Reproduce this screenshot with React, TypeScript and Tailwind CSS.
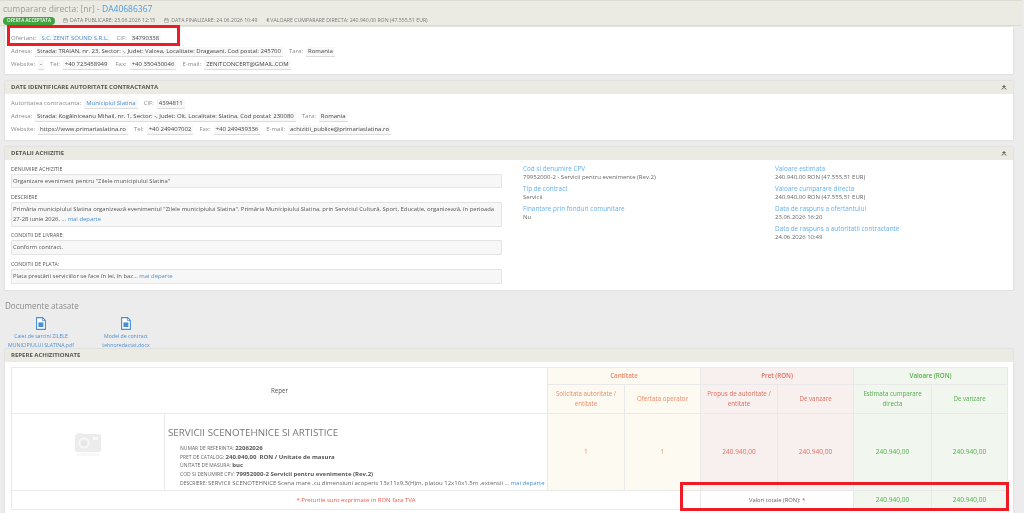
import type { ReactNode } from 'react';
import { Calendar } from 'lucide-react';

const font = { fontFamily: '"Open Sans", sans-serif' };

function Val({ children, link }: { children: ReactNode; link?: boolean }) {
  return (
    <span className={`mx-[3px] inline-block h-[10px] bg-[#f8f8f8] border-b border-[#dcdcdc] px-[2px] leading-[9px] ${link ? 'text-[#4a90d0]' : 'text-[#444]'}`}>
      {children}
    </span>
  );
}

function Row({ children }: { children: ReactNode }) {
  return <div className="flex h-[13px] items-center whitespace-nowrap text-[6px] text-[#8a8a8a]">{children}</div>;
}

function Lbl({ children }: { children: ReactNode }) {
  return <span className="ml-[3px] first:ml-0">{children}</span>;
}

function CollapseIcon() {
  return (
    <svg width="6" height="5" viewBox="0 0 7 6" className="fill-[#666]">
      <path d="M3.5 0 6 2.4H1z" />
      <path d="M3.5 2 7 5.4H5.6L3.5 3.4 1.4 5.4H0z" />
    </svg>
  );
}

function CardHead({ title, collapse = true }: { title: string; collapse?: boolean }) {
  return (
    <div className="flex h-[13px] items-center justify-between bg-[#ecebe3] pl-[6px] pr-[6px] text-[6px] font-bold text-[#555]">
      <span>{title}</span>
      {collapse && <CollapseIcon />}
    </div>
  );
}

function Field({ label, children, className }: { label: string; children: ReactNode; className: string }) {
  return (
    <div>
      <div className="h-[9px] text-[5.2px] leading-[9px] text-[#555]">{label}</div>
      <div className={`rounded-[1px] border border-[#e4e4e4] bg-[#f7f7f7] px-[1px] text-[5.9px] leading-[10px] text-[#555] ${className}`}>
        {children}
      </div>
    </div>
  );
}

function Info({ label, value }: { label: string; value: string }) {
  return (
    <div className="h-[20px] whitespace-nowrap">
      <div className="h-[8px] text-[6.4px] leading-[8px] text-[#66b0ee]">{label}</div>
      <div className="h-[8px] text-[6px] leading-[9px] text-[#666]">{value}</div>
    </div>
  );
}

function DocIcon() {
  return (
    <svg width="10" height="13" viewBox="0 0 10 13" className="mx-auto">
      <path d="M.6.6h6l2.8 2.8v9H.6z" fill="#fff" stroke="#4a90d0" strokeWidth="1.1" />
      <path d="M6.4.8v2.8h2.8" fill="none" stroke="#4a90d0" strokeWidth=".8" />
      <path d="M2.4 5.4h5v4.6h-5z" fill="#4a90d0" />
    </svg>
  );
}

function Doc({ l1, l2, w }: { l1: string; l2: string; w: string }) {
  return (
    <div className={`text-center text-[5.2px] leading-[8.5px] text-[#4a90d0] ${w}`}>
      <DocIcon />
      <div className="mt-[2px]">{l1}</div>
      <div>{l2}</div>
    </div>
  );
}

function CameraIcon() {
  return (
    <svg width="26" height="25" viewBox="0 0 26 25">
      <path d="M2 1h5v2H2z" fill="#eee" />
      <rect x="0" y="2" width="26" height="18" rx="2" fill="#ececec" />
      <circle cx="9" cy="11" r="5.6" fill="#f7f7f7" />
      <circle cx="9" cy="11" r="3.6" fill="#e8e8e8" />
      <rect x="18" y="5" width="5" height="3" fill="#f8f8f8" />
      <rect x="1" y="21" width="24" height="3" fill="#f8f8f8" />
    </svg>
  );
}

const cellBorder = 'border border-[#e9e9e9]';
const yellow = `${cellBorder} bg-[#fdfbf1] text-[#f08a6a]`;
const red = `${cellBorder} bg-[#f8f0ef] text-[#e0705f]`;
const green = `${cellBorder} bg-[#f1f7ef] text-[#55ad4e]`;

export default function App() {
  return (
    <div style={font} className="relative h-[513px] w-[1024px] overflow-hidden bg-[#ececec] blur-[0.45px]">
      {/* Title bar */}
      <div className="mr-[2px] h-[26px] border-y border-[#dcdcd4] bg-[#ecebe3] pl-[3px]">
        <div className="h-[15px] text-[8.5px] leading-[15px] text-[#9a9a9a]">
          cumparare directa: [nr] - <span className="text-[#4a9be0]">DA40686367</span>
        </div>
        <div className="flex h-[9px] items-center whitespace-nowrap text-[5.2px] text-[#777]">
          <span className="flex h-[8px] w-[52px] items-center justify-center rounded-full bg-[#3fa53f] text-[4.6px] font-semibold text-white">OFERTA ACCEPTATA</span>
          <Calendar size={5} className="ml-[8px] mr-[2px]" />
          <span>DATA PUBLICARE: 23.06.2026 12:15</span>
          <Calendar size={5} className="ml-[9px] mr-[2px]" />
          <span>DATA FINALIZARE: 24.06.2026 10:49</span>
          <span className="ml-[9px] mr-[1px]">€</span>
          <span>VALOARE CUMPARARE DIRECTA: 240.940,00 RON (47.555,51 EUR)</span>
        </div>
      </div>

      {/* Ofertant */}
      <div className="mx-[5px] mt-[1px] h-[47px] w-[1008px] bg-white pl-[6px] pt-[5px] shadow-[0_0_2px_#ccc]">
        <Row><Lbl>Ofertant:</Lbl><Val link>S.C. ZENIT SOUND S.R.L.</Val><Lbl>CIF:</Lbl><Val>34790338</Val></Row>
        <Row><Lbl>Adresa:</Lbl><Val>Strada: TRAIAN, nr. 23, Sector: -, Judet: Valcea, Localitate: Dragasani, Cod postal: 245700</Val><Lbl>Tara:</Lbl><Val>Romania</Val></Row>
        <Row><Lbl>Website:</Lbl><Val>-</Val><Lbl>Tel:</Lbl><Val>+40 723458949</Val><Lbl>Fax:</Lbl><Val>+40 350430046</Val><Lbl>E-mail:</Lbl><Val>ZENITCONCERT@GMAIL.COM</Val></Row>
      </div>

      {/* Autoritate */}
      <div className="mx-[5px] mt-[7px] h-[59px] w-[1008px] bg-white shadow-[0_0_2px_#ccc]">
        <CardHead title="DATE IDENTIFICARE AUTORITATE CONTRACTANTA" />
        <div className="pl-[6px] pt-[3px]">
          <Row><Lbl>Autoritatea contractanta:</Lbl><Val link>Municipiul Slatina</Val><Lbl>CIF:</Lbl><Val>4394811</Val></Row>
          <Row><Lbl>Adresa:</Lbl><Val>Strada: Kogălniceanu Mihail, nr. 1, Sector: -, Judet: Olt, Localitate: Slatina, Cod postal: 230080</Val><Lbl>Tara:</Lbl><Val>Romania</Val></Row>
          <Row><Lbl>Website:</Lbl><Val>https://www.primariaslatina.ro</Val><Lbl>Tel:</Lbl><Val>+40 249407002</Val><Lbl>Fax:</Lbl><Val>+40 249439336</Val><Lbl>E-mail:</Lbl><Val>achizitii_publice@primariaslatina.ro</Val></Row>
        </div>
      </div>

      {/* Detalii */}
      <div className="mx-[5px] mt-[7px] h-[143px] w-[1008px] bg-white shadow-[0_0_2px_#ccc]">
        <CardHead title="DETALII ACHIZITIE" />
        <div className="flex pt-[5px]">
          <div className="ml-[6px] flex w-[491px] flex-col gap-[4.5px]">
            <Field label="DENUMIRE ACHIZITIE" className="h-[14px] leading-[12px]">Organizare eveniment pentru "Zilele municipiului Slatina"</Field>
            <Field label="DESCRIERE" className="h-[25px] pt-[1px]">
              <span className="block whitespace-nowrap">Primăria municipiului Slatina organizează evenimentul "Zilele municipiului Slatina". Primăria Municipiului Slatina, prin Serviciul Cultură, Sport, Educație, organizează, în perioada</span>
              27-28 iunie 2026, ... <span className="text-[#4a90d0]">mai departe</span>
            </Field>
            <Field label="CONDITII DE LIVRARE:" className="h-[15px] leading-[13px]">Conform contract.</Field>
            <Field label="CONDITII DE PLATA:" className="h-[15px] leading-[13px]">
              Plata prestării serviciilor se face în lei, în baz... <span className="text-[#4a90d0]">mai departe</span>
            </Field>
          </div>
          <div className="ml-[21px] w-[252px]">
            <Info label="Cod si denumire CPV" value="79952000-2 - Servicii pentru evenimente (Rev.2)" />
            <Info label="Tip de contract" value="Servicii" />
            <Info label="Finantare prin fonduri comunitare" value="Nu" />
          </div>
          <div className="w-[230px]">
            <Info label="Valoare estimata" value="240.940,00  RON (47.555,51  EUR)" />
            <Info label="Valoare cumparare directa" value="240.940,00  RON (47.555,51  EUR)" />
            <Info label="Data de raspuns a ofertantului" value="23.06.2026 16:20" />
            <Info label="Data de raspuns a autoritatii contractante" value="24.06.2026 10:49" />
          </div>
        </div>
      </div>

      {/* Documente */}
      <div className="ml-[5px] mt-[10px] h-[12px] text-[8.1px] leading-[12px] text-[#8a8a8a]">Documente atasate</div>
      <div className="ml-[8px] mt-[5px] flex h-[32px] gap-[27px]">
        <Doc l1="Caiet de sarcini ZILELE" l2="MUNICIPIULUI SLATINA.pdf" w="w-[66px]" />
        <Doc l1="Model de contract" l2="tehnoredactat.docx" w="w-[50px]" />
      </div>

      {/* Repere */}
      <div className="ml-[5px] h-[170px] w-[1008px] bg-white shadow-[0_0_2px_#ccc]">
        <CardHead title="REPERE ACHIZITIONATE" collapse={false} />
        <table className="ml-[6px] mt-[5px] w-[996px] table-fixed border-collapse text-center text-[6.2px] text-[#666]">
          <colgroup>
            <col className="w-[153px]" />
            <col className="w-[383px]" />
            <col className="w-[77px]" />
            <col className="w-[76px]" />
            <col className="w-[77px]" />
            <col className="w-[76px]" />
            <col className="w-[78px]" />
            <col className="w-[76px]" />
          </colgroup>
          <tbody>
            <tr className="h-[17px]">
              <td rowSpan={2} colSpan={2} className={`${cellBorder} text-[#555]`}>Reper</td>
              <td colSpan={2} className={yellow}><span className="font-semibold">Cantitate</span></td>
              <td colSpan={2} className={red}><span className="font-semibold">Pret (RON)</span></td>
              <td colSpan={2} className={green}><span className="font-semibold">Valoare (RON)</span></td>
            </tr>
            <tr className="h-[29px] leading-[10px]">
              <td className={yellow}>Solicitata autoritate / entitate</td>
              <td className={yellow}>Ofertata operator</td>
              <td className={red}>Propus de autoritate / entitate</td>
              <td className={red}>De vanzare</td>
              <td className={green}>Estimata cumparare directa</td>
              <td className={green}>De vanzare</td>
            </tr>
            <tr className="h-[77px] text-[6.6px]">
              <td className={cellBorder}><div className="flex justify-center pb-[16px]"><CameraIcon /></div></td>
              <td className={`${cellBorder} pl-[3px] text-left align-top`}>
                <div className="mt-[11px] h-[16px] text-[9.8px] leading-[16px] text-[#777]">SERVICII SCENOTEHNICE SI ARTISTICE</div>
                <div className="ml-[12px] mt-[3px] whitespace-nowrap text-[5px] leading-[8.7px] text-[#666]">
                  <div>NUMAR DE REFERINTA: <b className="text-[6px] text-[#555]">22062026</b></div>
                  <div>PRET DE CATALOG: <b className="text-[6px] text-[#555]">240.940,00&nbsp; RON / Unitate de masura</b></div>
                  <div>UNITATE DE MASURA: <b className="text-[6px] text-[#555]">buc</b></div>
                  <div>COD SI DENUMIRE CPV: <b className="text-[6px] text-[#555]">79952000-2 Servicii pentru evenimente (Rev.2)</b></div>
                  <div>DESCRIERE: <span className="text-[6px]">SERVICII SCENOTEHNICE Scena mare ,cu dimensiuni acoperis 13x11x9,5(H)m, platou 12x10x1,5m ,extensii ...</span> <span className="text-[6px] text-[#4a90d0]">mai departe</span></div>
                </div>
              </td>
              <td className={yellow}>1</td>
              <td className={yellow}>1</td>
              <td className={red}>240.940,00</td>
              <td className={red}>240.940,00</td>
              <td className={green}>240.940,00</td>
              <td className={green}>240.940,00</td>
            </tr>
            <tr className="h-[19px]">
              <td colSpan={4} className={`${cellBorder} text-[6px] text-[#ee5a4a]`}>* Preturile sunt exprimate in RON fara TVA</td>
              <td colSpan={2} className={`${cellBorder} text-[5.8px]`}>Valori totale (RON): <span className="text-[#e33]">*</span></td>
              <td className={`${green} text-[6.6px]`}>240.940,00</td>
              <td className={`${green} text-[6.6px]`}>240.940,00</td>
            </tr>
          </tbody>
        </table>
      </div>

      {/* Red highlight frames drawn over the screenshot */}
      <div className="absolute left-[7px] top-[25px] h-[21px] w-[173px] border-[3px] border-[#ee1c25]" />
      <div className="absolute left-[680px] top-[482px] h-[29px] w-[329px] border-[3px] border-[#ee1c25]" />
    </div>
  );
}
